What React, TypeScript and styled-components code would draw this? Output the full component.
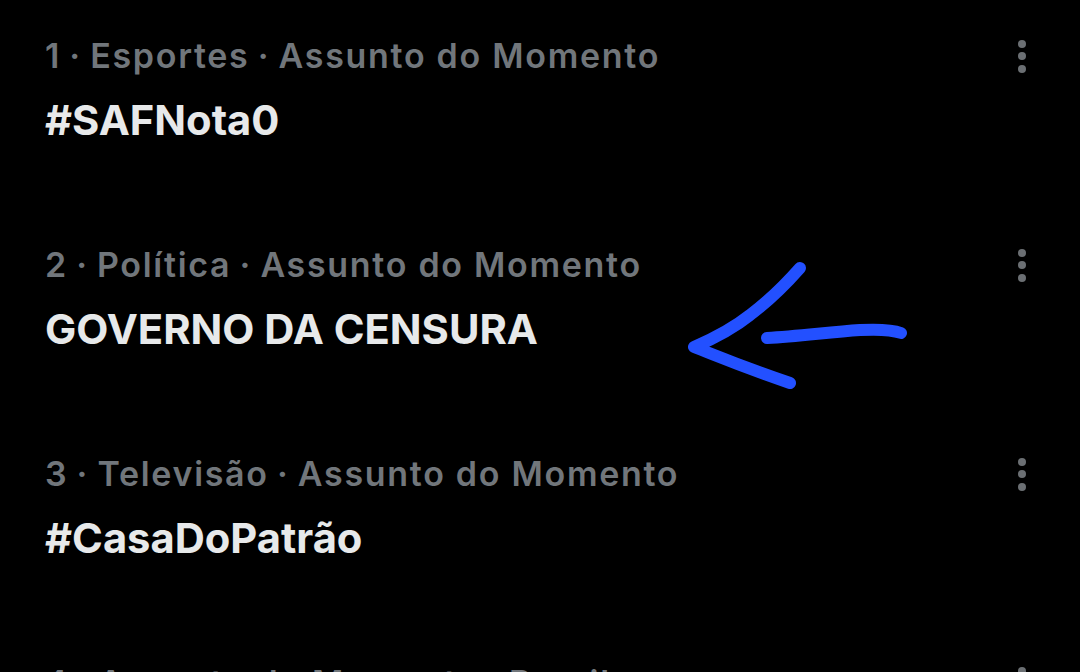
import { Fragment } from "react";
import styled, { createGlobalStyle } from "styled-components";

// Dados dos assuntos
type Trend = {
  rank: number;
  tags: string[];
  title: string;
};

const trends: Trend[] = [
  { rank: 1, tags: ["Esportes", "Assunto do Momento"], title: "#SAFNota0" },
  { rank: 2, tags: ["Política", "Assunto do Momento"], title: "GOVERNO DA CENSURA" },
  { rank: 3, tags: ["Televisão", "Assunto do Momento"], title: "#CasaDoPatrão" },
  { rank: 4, tags: ["Assunto do Momento", "Brasil"], title: "#Brasil" },
];

const GlobalStyle = createGlobalStyle`
  html, body {
    margin: 0;
    padding: 0;
    background: #000;
    overflow: hidden;
  }
`;

const Page = styled.div`
  position: relative;
  width: 1080px;
  height: 672px;
  overflow: hidden;
  background: #000;
  font-family: Inter, "Liberation Sans", Arial, sans-serif;
`;

const List = styled.ul`
  list-style: none;
  margin: 0;
  padding: 0;
`;

const Item = styled.li`
  display: flex;
  align-items: flex-start;
  height: 209px;
  box-sizing: border-box;
  padding: 36px 52px 0 45px;
`;

const Text = styled.div`
  flex: 1;
  display: flex;
  flex-direction: column;
  gap: 19px;
`;

const Meta = styled.span`
  font-size: 34px;
  line-height: 40px;
  font-weight: 600;
  letter-spacing: 1.7px;
  color: #71767b;
  white-space: nowrap;
`;

const Separator = styled.span`
  margin: 0 -2px;
`;

const Title = styled.span`
  font-size: 41.7px;
  line-height: 50px;
  font-weight: 700;
  color: #e7e9ea;
  white-space: nowrap;
`;

const MoreButton = styled.div`
  display: flex;
  flex-direction: column;
  align-items: center;
  justify-content: center;
  gap: 4.5px;
  height: 40px;
  width: 12px;
`;

const Dot = styled.span`
  width: 8px;
  height: 8px;
  border-radius: 50%;
  background: #6b6f73;
`;

const Arrow = styled.svg`
  position: absolute;
  left: 680px;
  top: 256px;
  width: 240px;
  height: 140px;
  pointer-events: none;
`;

const App = () => {
  return (
    <Page>
      <GlobalStyle />
      <List>
        {trends.map((trend) => (
          <Item key={trend.rank}>
            <Text>
              <Meta>
                {trend.rank}
                {trend.tags.map((tag) => (
                  <Fragment key={tag}>
                    <Separator> · </Separator>
                    {tag}
                  </Fragment>
                ))}
              </Meta>
              <Title>{trend.title}</Title>
            </Text>
            <MoreButton>
              <Dot />
              <Dot />
              <Dot />
            </MoreButton>
          </Item>
        ))}
      </List>

      {/* Seta desenhada à mão */}
      <Arrow viewBox="680 256 240 140">
        <g
          fill="none"
          stroke="#2350ff"
          strokeWidth="12"
          strokeLinecap="round"
          strokeLinejoin="round"
        >
          <path d="M800 268 C785 285 770 300 750 315 C735 327 715 338 694 347 C715 355 740 366 790 383" />
          <path d="M767 338 C800 336 830 332 860 330 C880 329 893 330 901 333" />
        </g>
      </Arrow>
    </Page>
  );
};

export default App;
